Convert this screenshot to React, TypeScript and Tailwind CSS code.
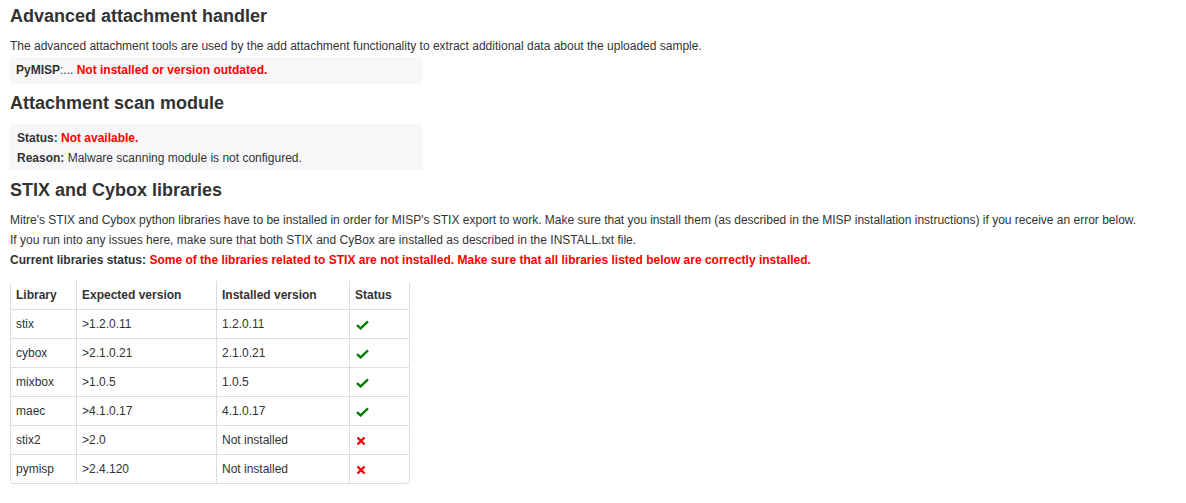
const libs = [
    { name: "stix",   expected: ">1.2.0.11",  installed: "1.2.0.11",      ok: true },
    { name: "cybox",  expected: ">2.1.0.21",  installed: "2.1.0.21",      ok: true },
    { name: "mixbox", expected: ">1.0.5",     installed: "1.0.5",         ok: true },
    { name: "maec",   expected: ">4.1.0.17",  installed: "4.1.0.17",      ok: true },
    { name: "stix2",  expected: ">2.0",       installed: "Not installed", ok: false },
    { name: "pymisp", expected: ">2.4.120",   installed: "Not installed", ok: false },
]

function CheckIcon() {
    return (
        <svg width="13" height="10" viewBox="0 0 13 10" className="inline-block align-middle">
            <path d="M1 5.2 L4.6 8.4 L12 1.4" fill="none" stroke="#008000" strokeWidth="2.4" />
        </svg>
    )
}

function TimesIcon() {
    return (
        <svg width="10" height="10" viewBox="0 0 10 10" className="inline-block align-middle">
            <path d="M1.5 1.5 L8.5 8.5 M8.5 1.5 L1.5 8.5" fill="none" stroke="#ff0000" strokeWidth="2.4" />
        </svg>
    )
}

const cell = "border-l border-t border-[#dddddd] px-[5px] py-[4px] text-left align-top"

export default function App() {
    return (
        <div className="px-[10px] text-[12px] leading-[20px] text-[#333333]" style={{ fontFamily: '"Liberation Sans", Arial, sans-serif' }}>
            {/* Advanced attachment handler */}
            <h3 className="mt-[6px] text-[18px] font-bold leading-[20px]">Advanced attachment handler</h3>
            <p className="mt-[10px]">
                The advanced attachment tools are used by the add attachment functionality to extract additional data about the uploaded sample.
            </p>
            <div className="mt-[1px] w-[412px] bg-[#f7f7f9] pl-[6px] pt-[3px] pb-[4px]">
                <b>PyMISP</b>:... <b className="text-[#ff0000]">Not installed or version outdated.</b>
            </div>

            {/* Attachment scan module */}
            <h3 className="mt-[9px] text-[18px] font-bold leading-[20px]">Attachment scan module</h3>
            <div className="mt-[11px] w-[412px] bg-[#f7f7f9] pl-[7px] pt-[4px] pb-[2px]">
                <div><b>Status:</b> <b className="text-[#ff0000]">Not available.</b></div>
                <div><b>Reason:</b> Malware scanning module is not configured.</div>
            </div>

            {/* STIX and Cybox libraries */}
            <h3 className="mt-[10px] text-[18px] font-bold leading-[20px]">STIX and Cybox libraries</h3>
            <p className="mt-[10px]">
                Mitre's STIX and Cybox python libraries have to be installed in order for MISP's STIX export to work. Make sure that you install them (as described in the MISP installation instructions) if you receive an error below.<br />
                If you run into any issues here, make sure that both STIX and CyBox are installed as described in the INSTALL.txt file.<br />
                <b>Current libraries status:</b> <b className="text-[#ff0000]">Some of the libraries related to STIX are not installed. Make sure that all libraries listed below are correctly installed.</b>
            </p>

            <div className="mt-[11px] w-[400px] overflow-hidden rounded-[4px] border border-l-0 border-t-0 border-[#dddddd]">
                <table className="w-full border-separate border-spacing-0">
                    <colgroup>
                        <col className="w-[66px]" />
                        <col className="w-[140px]" />
                        <col className="w-[133px]" />
                        <col />
                    </colgroup>
                    <thead>
                        <tr>
                            <th className={cell + " border-t-0 font-bold"}>Library</th>
                            <th className={cell + " border-t-0 font-bold"}>Expected version</th>
                            <th className={cell + " border-t-0 font-bold"}>Installed version</th>
                            <th className={cell + " border-t-0 font-bold"}>Status</th>
                        </tr>
                    </thead>
                    <tbody>
                        {libs.map((l) => (
                            <tr key={l.name}>
                                <td className={cell}>{l.name}</td>
                                <td className={cell}>{l.expected}</td>
                                <td className={cell}>{l.installed}</td>
                                <td className={cell + " pl-[6px]"}>{l.ok ? <CheckIcon /> : <TimesIcon />}</td>
                            </tr>
                        ))}
                    </tbody>
                </table>
            </div>
        </div>
    )
}
